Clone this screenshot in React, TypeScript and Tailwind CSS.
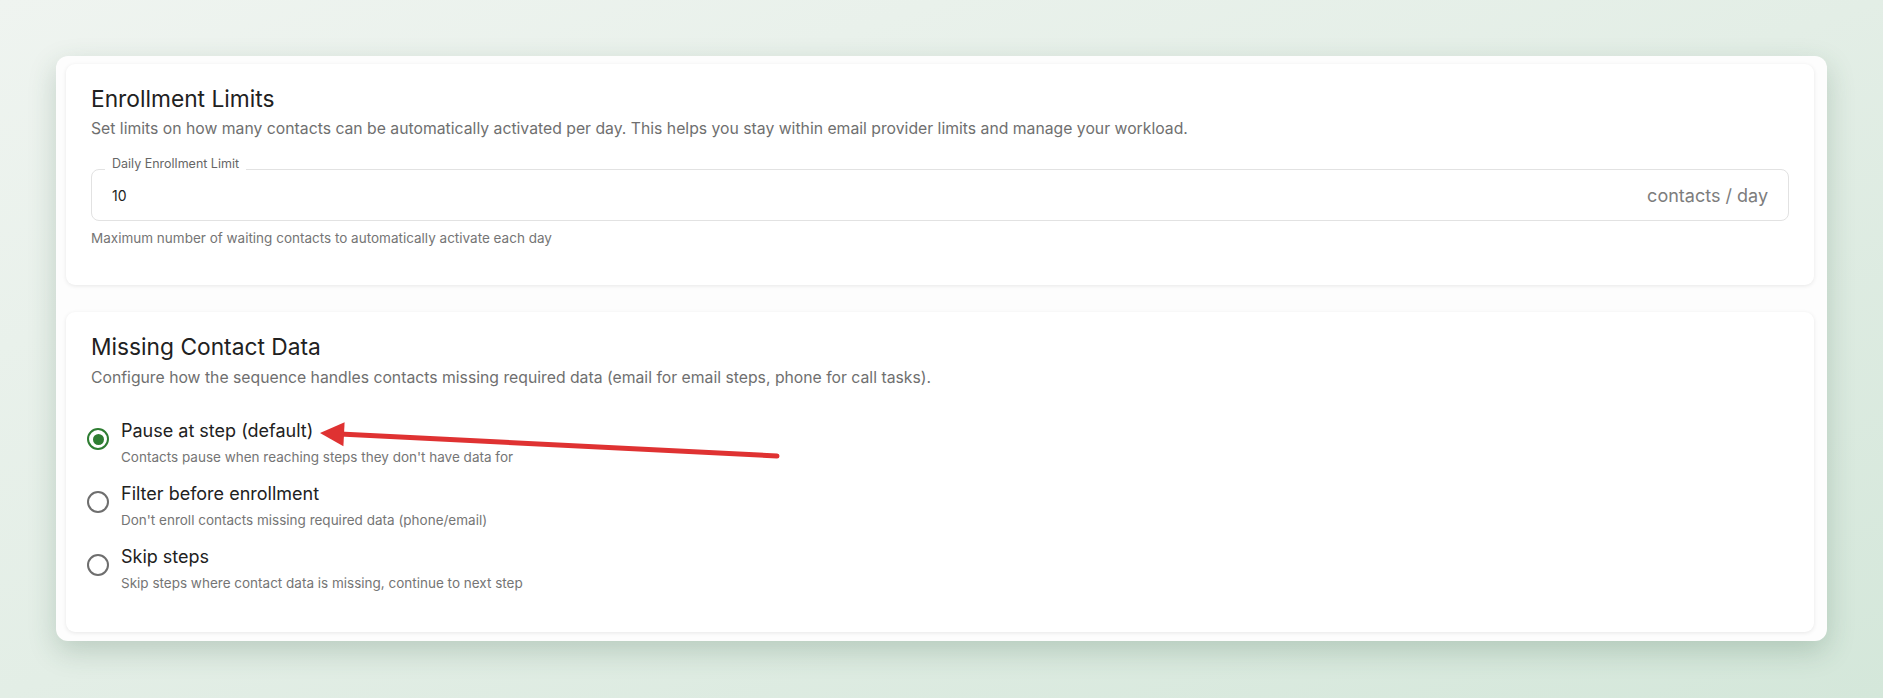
import { useState } from 'react';

interface RadioOption {
  value: string;
  label: string;
  hint: string;
}

const options: RadioOption[] = [
  { value: 'pause', label: 'Pause at step (default)', hint: "Contacts pause when reaching steps they don't have data for" },
  { value: 'filter', label: 'Filter before enrollment', hint: "Don't enroll contacts missing required data (phone/email)" },
  { value: 'skip', label: 'Skip steps', hint: 'Skip steps where contact data is missing, continue to next step' },
];

function Radio({ checked }: { checked: boolean }) {
  return (
    <span
      className={`mt-[9px] ml-[-4px] flex h-[22px] w-[22px] shrink-0 items-center justify-center rounded-full border-2 ${
        checked ? 'border-[#2e7d32]' : 'border-[#6e6e6e]'
      }`}
    >
      {checked && <span className="h-[11px] w-[11px] rounded-full bg-[#2e7d32]" />}
    </span>
  );
}

export default function App() {
  const [limit, setLimit] = useState('10');
  const [mode, setMode] = useState('pause');

  return (
    <div
      className="relative min-h-[698px] w-full bg-gradient-to-br from-[#eff4f0] via-[#e3eee6] to-[#d4e7da] px-[56px] pt-[56px] pb-[57px]"
      style={{ fontFamily: 'Inter, "Noto Sans", "Liberation Sans", sans-serif' }}
    >
      {/* Outer panel */}
      <div className="flex flex-col gap-[27px] rounded-[12px] bg-[#fdfdfd] pt-[8px] pb-[9px] pl-[10px] pr-[13px] shadow-[0_10px_28px_rgba(40,85,60,0.22)]">
        {/* Enrollment limits */}
        <section className="rounded-[9px] bg-white px-[25px] pt-[21px] pb-[38px] shadow-[0_1px_4px_rgba(0,0,0,0.09)]">
          <h2 className="text-[22.75px] leading-[28px] font-normal text-[#212121]">Enrollment Limits</h2>
          <p className="mt-[4px] text-[15.75px] leading-[24px] text-[#6f6f6f]">
            Set limits on how many contacts can be automatically activated per day. This helps you stay within email
            provider limits and manage your workload.
          </p>

          <div className="relative mt-[28px] flex h-[52px] items-center rounded-[8px] border border-[#e2e2e2] px-5">
            <span className="absolute top-[-14px] left-[13px] bg-white px-[7px] text-[12.5px] leading-[16px] text-[#666]">
              Daily Enrollment Limit
            </span>
            <input
              value={limit}
              onChange={(e) => setLimit(e.target.value)}
              className="flex-1 bg-transparent text-[14px] text-[#222] outline-none"
            />
            <span className="text-[18px] text-[#7d7d7d]">contacts / day</span>
          </div>
          <p className="mt-[8px] text-[13.5px] leading-[18px] text-[#757575]">
            Maximum number of waiting contacts to automatically activate each day
          </p>
        </section>

        {/* Missing contact data */}
        <section className="rounded-[9px] bg-white px-[25px] pt-[21px] pb-[40px] shadow-[0_1px_4px_rgba(0,0,0,0.09)]">
          <h2 className="text-[22.75px] leading-[28px] font-normal text-[#212121]">Missing Contact Data</h2>
          <p className="mt-[5px] text-[15.75px] leading-[24px] text-[#6f6f6f]">
            Configure how the sequence handles contacts missing required data (email for email steps, phone for call
            tasks).
          </p>

          <div className="mt-[29px] flex flex-col gap-[16px]">
            {options.map((opt) => (
              <label key={opt.value} className="flex cursor-pointer items-start gap-[12px]" onClick={() => setMode(opt.value)}>
                <Radio checked={mode === opt.value} />
                <div className="flex flex-col">
                  <span className="text-[18px] leading-[24px] text-[#212121]">{opt.label}</span>
                  <span className="mt-[5px] text-[13.5px] leading-[18px] text-[#757575]">{opt.hint}</span>
                </div>
              </label>
            ))}
          </div>
        </section>
      </div>

      {/* Annotation arrow */}
      <svg className="pointer-events-none absolute top-0 left-0" width="1883" height="698" viewBox="0 0 1883 698">
        <line x1="340" y1="434" x2="777" y2="456" stroke="#df3232" strokeWidth="5" strokeLinecap="round" />
        <polygon points="320,433 344.6,422.2 343.4,446.2" fill="#df3232" />
      </svg>
    </div>
  );
}
